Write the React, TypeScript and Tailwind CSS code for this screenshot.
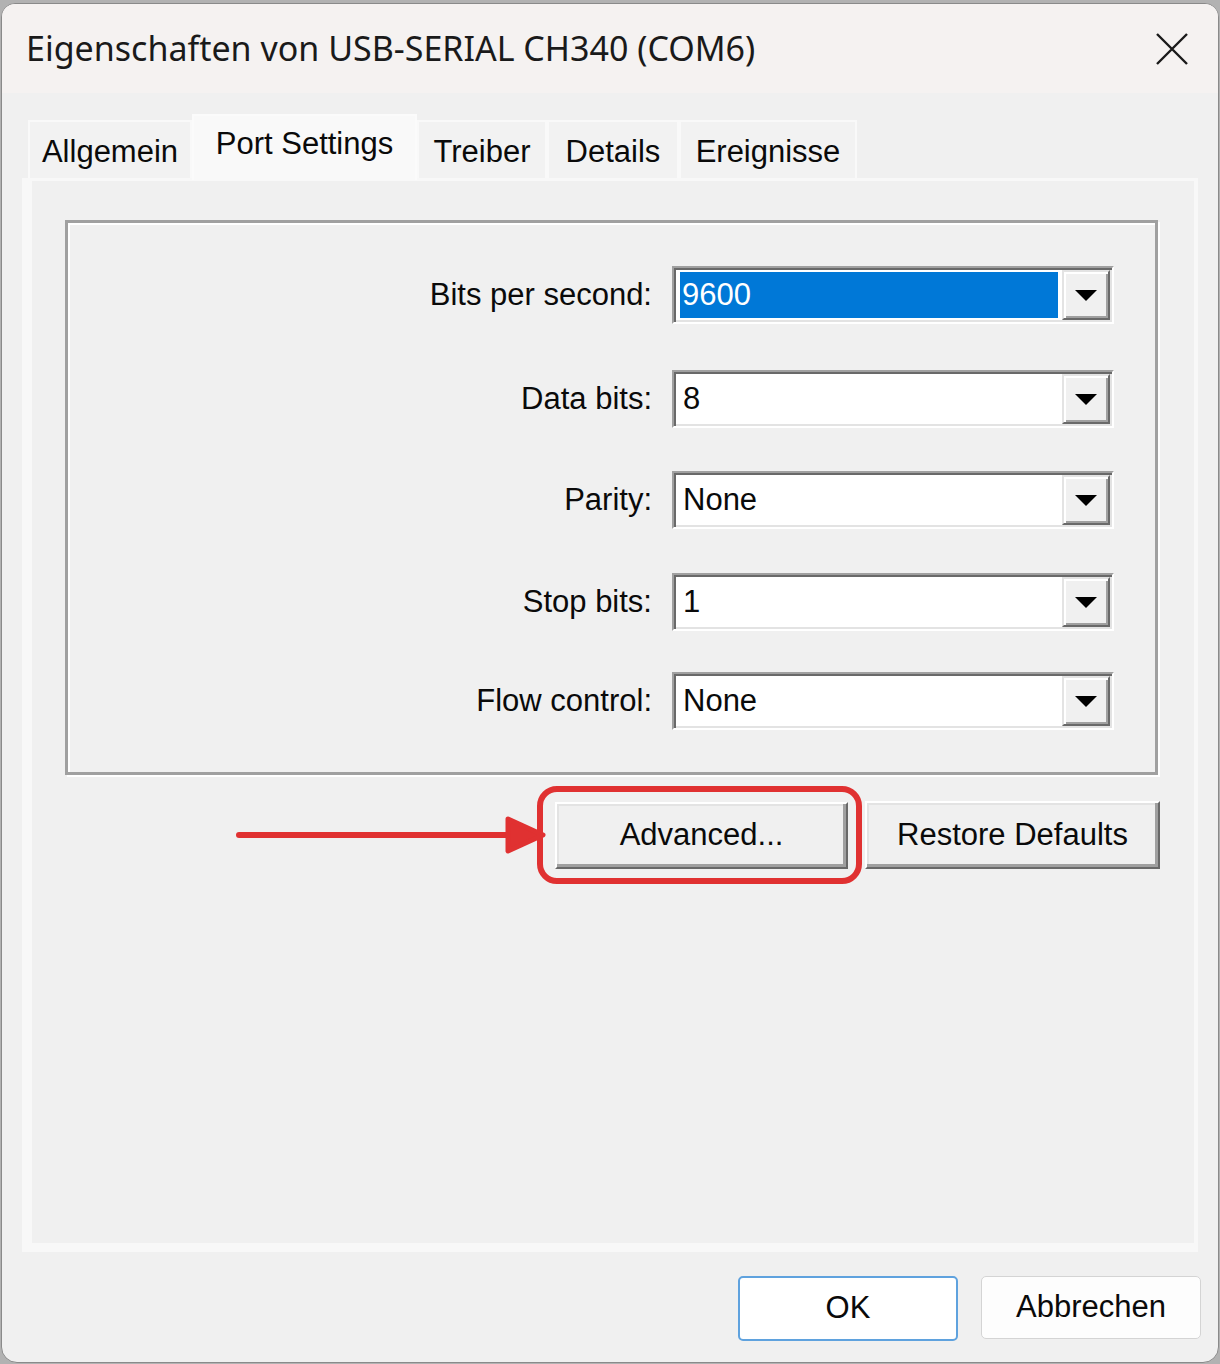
import React from "react";

function Triangle() {
  return (
    <svg width="22" height="11" viewBox="0 0 22 11">
      <polygon points="0,0 22,0 11,11" fill="#000" />
    </svg>
  );
}

function DropBtn() {
  return (
    <div className="flex h-full w-[48px] items-center justify-center border-2 border-t-[#e3e3e3] border-l-[#e3e3e3] border-r-[#696969] border-b-[#696969] bg-[#f0f0f0] shadow-[inset_2px_2px_0_#ffffff,inset_-2px_-2px_0_#a0a0a0]">
      <Triangle />
    </div>
  );
}

function Combo({ value, selected }: { value: string; selected?: boolean }) {
  return (
    <div className="flex h-[58px] w-[442px] border-2 border-t-[#a0a0a0] border-l-[#a0a0a0] border-r-white border-b-white bg-white p-[2px] shadow-[inset_2px_2px_0_#696969,inset_-2px_-2px_0_#e3e3e3]">
      <div className="flex flex-1 items-center">
        {selected ? (
          <div className="ml-[4px] flex h-[46px] w-[378px] items-center bg-[#0078d7] pl-[2px] text-white">
            {value}
          </div>
        ) : (
          <span className="pl-[7px]">{value}</span>
        )}
      </div>
      <DropBtn />
    </div>
  );
}

function Row({ label, value, selected, className }: { label: string; value: string; selected?: boolean; className?: string }) {
  return (
    <div className={"flex items-center justify-end gap-[20px] " + (className ?? "")}>
      <span>{label}</span>
      <Combo value={value} selected={selected} />
    </div>
  );
}

function ClassicButton({ children, className }: { children: React.ReactNode; className?: string }) {
  return (
    <div
      className={
        "flex items-center justify-center border-2 border-t-white border-l-white border-r-[#696969] border-b-[#696969] bg-[#f0f0f0] shadow-[inset_-3px_-3px_0_#a0a0a0,inset_2px_2px_0_#e3e3e3] " +
        (className ?? "")
      }
    >
      {children}
    </div>
  );
}

function Tab({ label, w, selected }: { label: string; w: string; selected?: boolean }) {
  if (selected) {
    return (
      <div className={"relative z-10 -mb-[2px] flex h-[66px] items-center justify-center border-2 border-b-0 border-[#fbfbfb] bg-[#f9f9f9] pb-[8px] " + w}>
        {label}
      </div>
    );
  }
  return (
    <div className={"flex h-[58px] items-center justify-center border-2 border-b-0 border-[#f9f9f9] bg-[#f2f2f2] pt-[4px] " + w}>
      {label}
    </div>
  );
}

export default function App() {
  return (
    <div className="h-[1364px] w-[1220px] overflow-hidden bg-[#b2b2b2] pl-[1px] pt-[3px] font-['Liberation_Sans',Arial,sans-serif] text-[31px] text-[#0a0a0a]">
      <div className="flex h-[1360px] w-[1218px] flex-col overflow-hidden rounded-t-[14px] rounded-b-[16px] border border-[#8a8a8a] bg-[#f0f0f0]">
        {/* Title bar */}
        <div className="flex h-[89px] items-center justify-between bg-[#f5f2f1] pl-[24px] pr-[29px]">
          <span className="font-['Noto_Sans',sans-serif] text-[34px] text-[#1a1a1a]">
            Eigenschaften von USB-SERIAL CH340 (COM6)
          </span>
          <svg width="34" height="32" viewBox="0 0 34 32">
            <path d="M2 1 L32 31 M32 1 L2 31" stroke="#1a1a1a" strokeWidth="2.4" fill="none" />
          </svg>
        </div>

        {/* Tabs */}
        <div className="flex h-[85px] items-end pl-[26px]">
          <Tab label="Allgemein" w="w-[164px]" />
          <Tab label="Port Settings" w="w-[225px]" selected />
          <Tab label="Treiber" w="w-[130px]" />
          <Tab label="Details" w="w-[132px]" />
          <Tab label="Ereignisse" w="w-[178px]" />
        </div>

        {/* Panel */}
        <div className="ml-[20px] h-[1074px] w-[1176px] border-t-[3px] border-r-[4px] border-b-[9px] border-l-[10px] border-[#f8f8f8] bg-[#f0f0f0] pt-[39px] pl-[33px] pr-[36px]">
          <div className="flex flex-col border-[3px] border-[#a0a0a0] pt-[43px] pr-[41px] pb-[42px] shadow-[inset_2px_2px_0_#ffffff,2px_2px_0_#ffffff]">
            <Row label="Bits per second:" value="9600" selected />
            <Row label="Data bits:" value="8" className="mt-[46px]" />
            <Row label="Parity:" value="None" className="mt-[43px]" />
            <Row label="Stop bits:" value="1" className="mt-[44px]" />
            <Row label="Flow control:" value="None" className="mt-[41px]" />
          </div>

          <div className="-mr-[2px] mt-[11px] flex items-center justify-end">
            <svg width="310" height="40" viewBox="0 0 310 40" className="shrink-0">
              <line x1="3" y1="20" x2="276" y2="20" stroke="#e03131" strokeWidth="6" strokeLinecap="round" />
              <polygon points="272,4 307,20 272,36" fill="#e03131" stroke="#e03131" strokeWidth="5" strokeLinejoin="round" />
            </svg>
            <div className="-ml-[9px] flex h-[98px] w-[325px] shrink-0 items-center rounded-[20px] border-[6px] border-[#e03131] pl-[12px]">
              <ClassicButton className="h-[67px] w-[293px]">Advanced...</ClassicButton>
            </div>
            <ClassicButton className="ml-[3px] h-[68px] w-[295px] shrink-0">Restore Defaults</ClassicButton>
          </div>
        </div>

        {/* Bottom buttons */}
        <div className="flex justify-end gap-[23px] pr-[17px] pt-[24px]">
          <div className="flex h-[65px] w-[220px] items-center justify-center rounded-[5px] border-2 border-[#5fa2de] bg-white">
            OK
          </div>
          <div className="flex h-[63px] w-[220px] items-center justify-center rounded-[5px] border border-[#d4d4d4] bg-[#fdfdfd]">
            Abbrechen
          </div>
        </div>
      </div>
    </div>
  );
}
